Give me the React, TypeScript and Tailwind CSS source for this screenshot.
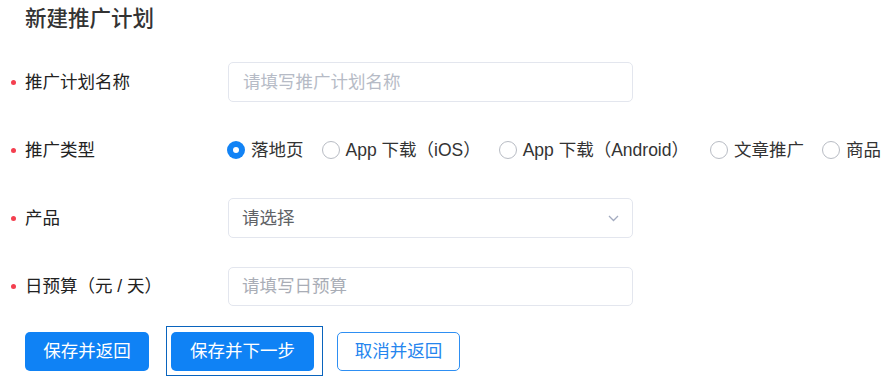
import React from "react";

const font = { fontFamily: '"Liberation Sans", "Noto Sans CJK SC", sans-serif' };

function Label({ text }: { text: string }) {
  return (
    <div className="flex items-center w-[228px] shrink-0 pl-[11px]">
      <span className="w-[5px] h-[5px] rounded-full bg-[#f43f4f] mr-[9px]" />
      <span className="text-[17.5px] text-[#222]">{text}</span>
    </div>
  );
}

function Radio({ label, checked, wide }: { label: string; checked?: boolean; wide?: boolean }) {
  return (
    <label className={wide ? "flex items-center mr-[21px] text-[17.5px] text-[#333]" : "flex items-center mr-[18px] text-[17.5px] text-[#333]"}>
      {checked ? (
        <span className="w-[18px] h-[18px] rounded-full bg-[#1283f5] flex items-center justify-center">
          <span className="w-[6px] h-[6px] rounded-full bg-white" />
        </span>
      ) : (
        <span className="w-[18px] h-[18px] rounded-full border border-[#b8bcc4] bg-white" />
      )}
      <span className="ml-[6px] whitespace-nowrap">{label}</span>
    </label>
  );
}

export default function App() {
  return (
    <div className="w-[892px] h-[383px] bg-white overflow-hidden" style={font}>
      <div className="pt-[7px] pl-[25px] text-[21.5px] leading-[25px] text-[#333] font-medium">新建推广计划</div>

      <div className="mt-[30px] flex flex-col gap-[28px]">
        <div className="flex items-center h-[40px]">
          <Label text="推广计划名称" />
          <div className="w-[405px] h-[40px] rounded-[5px] border border-[#e3e6ee] flex items-center px-[14px] text-[17.5px] text-[#b6bbc6]">
            请填写推广计划名称
          </div>
        </div>

        <div className="flex items-center h-[40px]">
          <Label text="推广类型" />
          <div className="flex items-center -ml-[1px]">
            <Radio label="落地页" checked />
            <Radio label="App 下载（iOS）" />
            <Radio label="App 下载（Android）" wide />
            <Radio label="文章推广" />
            <Radio label="商品" />
          </div>
        </div>

        <div className="flex items-center h-[40px]">
          <Label text="产品" />
          <div className="w-[405px] h-[40px] rounded-[5px] border border-[#e3e6ee] flex items-center justify-between px-[13px] text-[17.5px] text-[#606266]">
            <span>请选择</span>
            <svg width="11" height="7" viewBox="0 0 11 7" fill="none">
              <path d="M1 1l4.5 4.5L10 1" stroke="#a3abc0" strokeWidth="1.3" />
            </svg>
          </div>
        </div>

        <div className="flex items-center h-[40px]">
          <Label text="日预算（元 / 天）" />
          <div className="w-[405px] h-[39px] rounded-[5px] border border-[#e3e6ee] flex items-center px-[13px] text-[17.5px] text-[#a9adb6]">
            请填写日预算
          </div>
        </div>
      </div>

      <div className="mt-[26px] pl-[25px] flex items-center">
        <button className="w-[124px] h-[39px] rounded-[5px] bg-[#0f82f5] text-white text-[17.5px]">保存并返回</button>
        <div className="relative ml-[22px]">
          <div className="absolute -left-[5px] -top-[6px] -right-[9px] -bottom-[5px] border border-[#0a64bd]" />
          <button className="relative w-[143px] h-[39px] rounded-[5px] bg-[#0f82f5] text-white text-[17.5px]">保存并下一步</button>
        </div>
        <button className="ml-[23px] w-[123px] h-[39px] rounded-[5px] bg-white border border-[#2e8ff3] text-[#2585ee] text-[17.5px]">取消并返回</button>
      </div>
    </div>
  );
}
